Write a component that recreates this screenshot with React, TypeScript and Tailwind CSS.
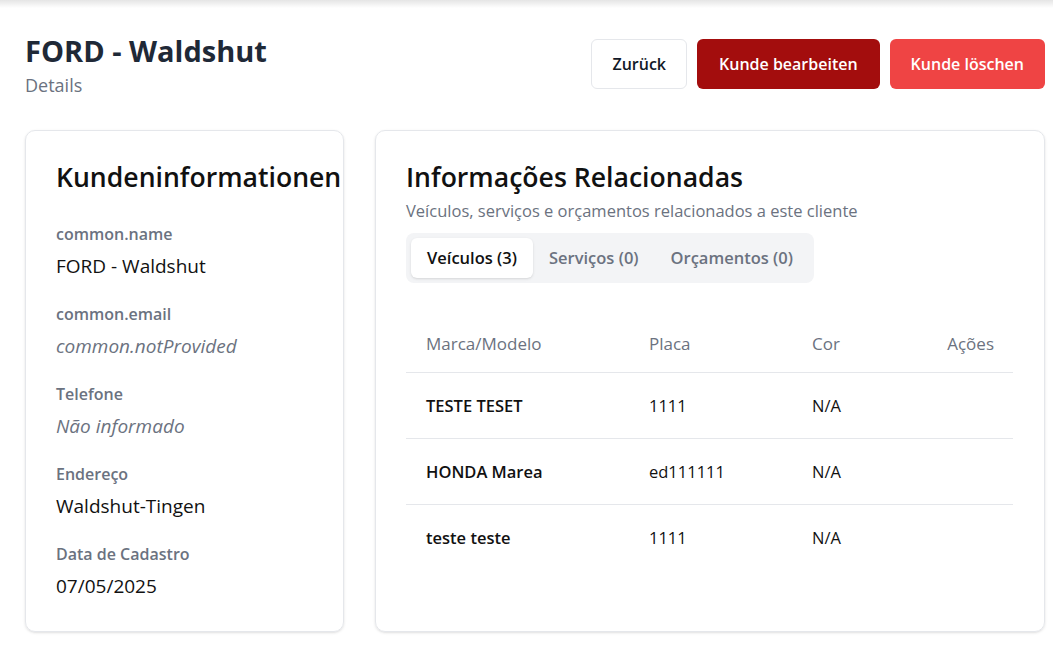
import React from "react";

const font = { fontFamily: '"Open Sans", "Noto Sans", sans-serif' };

function Field({ label, value, muted }: { label: string; value: string; muted?: boolean }) {
  return (
    <div className="flex flex-col gap-[7px]">
      <div className="text-[16px] font-semibold text-[#6b7280] leading-[24px]">{label}</div>
      <div className={muted ? "text-[19px] italic text-[#6b7280] leading-[26px]" : "text-[19px] text-[#111] leading-[26px]"}>{value}</div>
    </div>
  );
}

export default function App() {
  const rows = [
    { m: "TESTE TESET", p: "1111", c: "N/A" },
    { m: "HONDA Marea", p: "ed111111", c: "N/A" },
    { m: "teste teste", p: "1111", c: "N/A" },
  ];
  return (
    <div className="min-h-[651px] bg-white relative" style={font}>
      <div className="h-[8px] bg-gradient-to-b from-[#e5e5e5] to-white" />
      <div className="pl-[25px] pr-[8px] pt-[24px]">
        <div className="flex justify-between items-start">
          <div className="flex flex-col">
            <h1 className="text-[29px] font-bold text-[#1f2937] leading-[38px]">FORD - Waldshut</h1>
            <div className="text-[18px] text-[#6b7280] leading-[26px] mt-[2px]">Details</div>
          </div>
          <div className="flex gap-[10px] mt-[7px]">
            <button className="h-[50px] px-[20px] rounded-[6px] border border-[#e5e7eb] bg-white text-[16px] font-semibold text-[#111827]">Zurück</button>
            <button className="h-[50px] px-[22px] rounded-[6px] bg-[#a30d0d] text-[16px] font-semibold text-white">Kunde bearbeiten</button>
            <button className="h-[50px] px-[21px] rounded-[6px] bg-[#ef4444] text-[16px] font-semibold text-white">Kunde löschen</button>
          </div>
        </div>

        <div className="flex gap-[31px] mt-[32px]">
          <div className="w-[319px] h-[502px] shrink-0 rounded-[10px] border border-[#e5e7eb] shadow-sm px-[30px] pt-[26px]">
            <h2 className="text-[26.6px] font-semibold text-[#111] leading-[40px] whitespace-nowrap">Kundeninformationen</h2>
            <div className="flex flex-col gap-[23px] mt-[25px]">
              <Field label="common.name" value="FORD - Waldshut" />
              <Field label="common.email" value="common.notProvided" muted />
              <Field label="Telefone" value="Não informado" muted />
              <Field label="Endereço" value="Waldshut-Tingen" />
              <Field label="Data de Cadastro" value="07/05/2025" />
            </div>
          </div>

          <div className="flex-1 h-[502px] rounded-[10px] border border-[#e5e7eb] shadow-sm pl-[30px] pr-[31px] pt-[26px]">
            <h2 className="text-[26.6px] font-semibold text-[#111] leading-[40px]">Informações Relacionadas</h2>
            <div className="text-[16.5px] text-[#6b7280] leading-[24px] mt-[2px]">Veículos, serviços e orçamentos relacionados a este cliente</div>
            <div className="inline-flex mt-[10px] p-[5px] rounded-[8px] bg-[#f3f4f6] gap-0">
              <div className="h-[40px] px-[16px] rounded-[6px] bg-white shadow-sm flex items-center text-[16.5px] font-semibold text-[#111]">Veículos (3)</div>
              <div className="h-[40px] px-[16px] flex items-center text-[16.5px] font-semibold text-[#6b7280]">Serviços (0)</div>
              <div className="h-[40px] px-[16px] flex items-center text-[16.5px] font-semibold text-[#6b7280]">Orçamentos (0)</div>
            </div>
            <table className="w-full mt-[30px] text-[17px]">
              <thead>
                <tr className="border-b border-[#e5e7eb] h-[59px]">
                  <th className="text-left font-normal text-[#6b7280] pl-[20px] pt-[2px] w-[243px]">Marca/Modelo</th>
                  <th className="text-left font-normal text-[#6b7280] pt-[2px] w-[163px]">Placa</th>
                  <th className="text-left font-normal text-[#6b7280] pt-[2px]">Cor</th>
                  <th className="text-right font-normal text-[#6b7280] pt-[2px] pr-[19px]">Ações</th>
                </tr>
              </thead>
              <tbody>
                {rows.map((r, i) => (
                  <tr key={i} className={i < 2 ? "border-b border-[#e5e7eb] h-[66px]" : "h-[66px]"}>
                    <td className="pl-[20px] pt-[3px] font-semibold text-[#111] text-[16.5px]">{r.m}</td>
                    <td className="pt-[3px] text-[#111] text-[16.5px]">{r.p}</td>
                    <td className="pt-[3px] text-[#111] text-[16.5px]">{r.c}</td>
                    <td />
                  </tr>
                ))}
              </tbody>
            </table>
          </div>
        </div>
      </div>
    </div>
  );
}
